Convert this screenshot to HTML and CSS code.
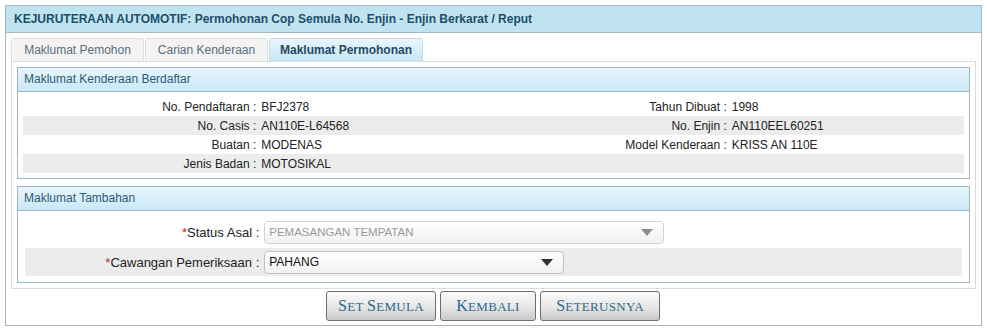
FILE: index.html
```html
<!DOCTYPE html>
<html>
<head>
<meta charset="utf-8">
<link rel="stylesheet" href="styles.css">
</head>
<body>
<div class="panel">
  <div class="panel-head">KEJURUTERAAN AUTOMOTIF: Permohonan Cop Semula No. Enjin - Enjin Berkarat / Reput</div>
  <div class="panel-body">
    <div class="tabs">
      <div class="tab t1">Maklumat Pemohon</div>
      <div class="tab t2">Carian Kenderaan</div>
      <div class="tab t3 active">Maklumat Permohonan</div>
    </div>
    <div class="tab-panel">
      <div class="section">
        <div class="section-head">Maklumat Kenderaan Berdaftar</div>
        <div class="section-body">
          <table class="info">
            <tr>
              <td class="lbl">No. Pendaftaran :</td><td class="val">BFJ2378</td>
              <td class="lbl">Tahun Dibuat :</td><td class="val">1998</td>
            </tr>
            <tr class="alt">
              <td class="lbl">No. Casis :</td><td class="val">AN110E-L64568</td>
              <td class="lbl">No. Enjin :</td><td class="val">AN110EEL60251</td>
            </tr>
            <tr>
              <td class="lbl">Buatan :</td><td class="val">MODENAS</td>
              <td class="lbl">Model Kenderaan :</td><td class="val">KRISS AN 110E</td>
            </tr>
            <tr class="alt">
              <td class="lbl">Jenis Badan :</td><td class="val">MOTOSIKAL</td>
              <td class="lbl"></td><td class="val"></td>
            </tr>
          </table>
        </div>
      </div>
      <div class="section second">
        <div class="section-head">Maklumat Tambahan</div>
        <div class="section-body body2">
          <table class="form">
            <tr class="r1">
              <td class="flbl"><span class="req">*</span>Status Asal :</td>
              <td class="fval">
                <div class="select disabled w400"><span>PEMASANGAN TEMPATAN</span><i class="arrow"></i></div>
              </td>
            </tr>
            <tr class="r2 alt">
              <td class="flbl"><span class="req">*</span>Cawangan Pemeriksaan :</td>
              <td class="fval">
                <div class="select w300"><span>PAHANG</span><i class="arrow"></i></div>
              </td>
            </tr>
          </table>
        </div>
      </div>
    </div>
    <div class="buttons">
      <button class="btn b1"><span class="cap">S</span>et <span class="cap">S</span>emula</button>
      <button class="btn b2"><span class="cap">K</span>embali</button>
      <button class="btn b3"><span class="cap">S</span>eterusnya</button>
    </div>
  </div>
</div>
</body>
</html>
```
FILE: styles.css
```css
html, body {
  margin: 0;
  padding: 0;
  background: #ffffff;
}
body {
  font-family: "Liberation Sans", Arial, sans-serif;
  font-size: 12px;
  color: #222;
}
.panel {
  margin: 5px 0 0 5px;
  width: 975px;
  height: 319px;
  border: 1px solid #a5b7c1;
}
.panel-head {
  height: 26px;
  line-height: 26px;
  background: #c0e4ef;
  border-bottom: 1px solid #a5b7c1;
  padding-left: 8px;
  font-weight: bold;
  color: #1d4e6e;
}
.panel-body {
  padding: 5px 6px 0 5px;
}
.tabs {
  display: flex;
  gap: 1px;
  height: 23px;
}
.tab {
  box-sizing: border-box;
  height: 23px;
  line-height: 22px;
  border: 1px solid #dedede;
  border-bottom: none;
  border-radius: 2px 2px 0 0;
  background: #f3f3f3;
  color: #5a6e7c;
  text-align: center;
}
.t1 { width: 133px; }
.t2 { width: 123px; }
.t3 { width: 154px; }
.tab.active {
  background: linear-gradient(#eaf6fb, #c7e7f4);
  border-color: #c9dbe4;
  color: #1f4a66;
  font-weight: bold;
}
.tab-panel {
  box-sizing: border-box;
  width: 965px;
  height: 228px;
  border: 1px solid #dcdcdc;
  padding: 5px;
}
.section {
  border: 1px solid #9fb6c3;
}
.section.second {
  margin-top: 7px;
}
.section-head {
  height: 23px;
  line-height: 23px;
  background: linear-gradient(#e9f6fc, #c9e8f6);
  border-bottom: 1px solid #9fb6c3;
  padding-left: 6px;
  color: #2b5b79;
}
.section-body {
  padding: 5px 5px 5px 5px;
}
.body2 {
  padding: 5px 7px 6px 7px;
}
table {
  width: 100%;
  border-collapse: collapse;
  table-layout: fixed;
}
.info td {
  height: 19px;
  padding: 0;
  white-space: nowrap;
}
.info .lbl {
  text-align: right;
  padding-right: 2px;
}
.info .val {
  padding-left: 3px;
}
tr.alt td {
  background: #ececec;
}
.form .flbl {
  width: 25%;
  text-align: right;
  padding: 0 2px 0 0;
  white-space: nowrap;
  font-size: 13px;
}
.form .fval {
  padding: 0 0 0 3px;
}
.form .r1 td { height: 32px; }
.form .r2 td { height: 28px; }
.req { color: #c8282d; }
.select {
  box-sizing: border-box;
  height: 23px;
  border: 1px solid #b9c4cb;
  border-radius: 4px;
  background: linear-gradient(#ffffff, #f1f1f1);
  display: flex;
  align-items: center;
  justify-content: space-between;
  padding: 0 10px 0 4px;
  color: #111;
}
.select.disabled {
  border-color: #cdd5da;
  color: #9a9a9a;
  font-size: 11.5px;
}
.w400 { width: 400px; }
.w300 { width: 300px; }
.arrow {
  width: 0;
  height: 0;
  border-left: 6px solid transparent;
  border-right: 6px solid transparent;
  border-top: 7px solid #333;
}
.disabled .arrow {
  border-top-color: #8c8c8c;
}
.buttons {
  display: flex;
  justify-content: center;
  gap: 4px;
  margin-top: 2px;
}
.btn {
  box-sizing: border-box;
  height: 30px;
  border: 1px solid #6f6f6f;
  border-radius: 3px;
  background: linear-gradient(#fbfbfb, #e6e6e6 55%, #c9c9c9);
  font-family: "Liberation Serif", "Times New Roman", serif;
  text-transform: uppercase;
  font-size: 13px;
  letter-spacing: 0.3px;
  color: #2b6a8d;
  padding: 0;
  margin: 0;
}
.btn .cap {
  font-size: 16px;
}
.b1 { width: 110px; }
.b2 { width: 96px; }
.b3 { width: 120px; }
```
